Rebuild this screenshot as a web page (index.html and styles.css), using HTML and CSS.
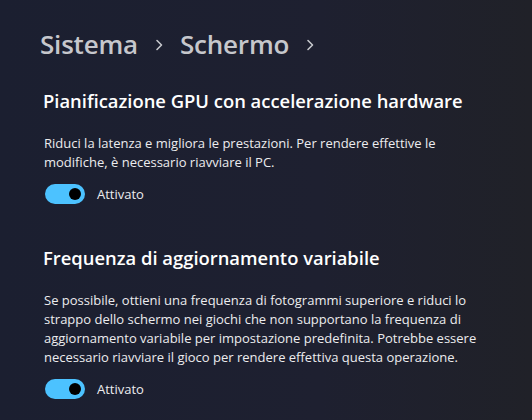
FILE: index.html
```html
<!DOCTYPE html>
<html lang="it">
<head>
<meta charset="utf-8">
<link rel="stylesheet" href="styles.css">
</head>
<body>
<div class="page">
  <nav class="crumbs">
    <span class="crumb">Sistema</span>
    <svg class="chev" viewBox="0 0 8 12" width="8" height="12"><path d="M2 1.5 L6.5 6 L2 10.5" fill="none" stroke="currentColor" stroke-width="1.6" stroke-linecap="round" stroke-linejoin="round"/></svg>
    <span class="crumb">Schermo</span>
    <svg class="chev" viewBox="0 0 8 12" width="8" height="12"><path d="M2 1.5 L6.5 6 L2 10.5" fill="none" stroke="currentColor" stroke-width="1.6" stroke-linecap="round" stroke-linejoin="round"/></svg>
  </nav>

  <section class="setting first">
    <h2 class="title">Pianificazione GPU con accelerazione hardware</h2>
    <p class="desc">Riduci la latenza e migliora le prestazioni. Per rendere effettive le modifiche, è necessario riavviare il PC.</p>
    <div class="toggle-row">
      <span class="toggle"><span class="thumb"></span></span>
      <span class="state">Attivato</span>
    </div>
  </section>

  <section class="setting second">
    <h2 class="title">Frequenza di aggiornamento variabile</h2>
    <p class="desc">Se possibile, ottieni una frequenza di fotogrammi superiore e riduci lo strappo dello schermo nei giochi che non supportano la frequenza di aggiornamento variabile per impostazione predefinita. Potrebbe essere necessario riavviare il gioco per rendere effettiva questa operazione.</p>
    <div class="toggle-row">
      <span class="toggle"><span class="thumb"></span></span>
      <span class="state">Attivato</span>
    </div>
  </section>
</div>
</body>
</html>
```

FILE: styles.css
```css
html, body {
  margin: 0;
  padding: 0;
  height: 100%;
}
body {
  background: linear-gradient(90deg, #1b1f30 0%, #1e2030 60%, #202128 100%);
  font-family: "Open Sans", "Noto Sans", sans-serif;
  color: #ffffff;
  overflow: hidden;
}
.page {
  padding: 28px 0 0 40px;
  width: 480px;
}
.crumbs {
  display: flex;
  align-items: center;
  color: #c6c7cc;
  height: 32px;
}
.crumb {
  font-size: 26px;
  font-weight: 600;
  letter-spacing: -0.2px;
  line-height: 32px;
}
.chev {
  margin: 2px 17px 0 17px;
  color: #c6c7cc;
}
.setting {
  padding-left: 3px;
}
.setting.first {
  margin-top: 28px;
}
.setting.second {
  margin-top: 41px;
}
.title {
  margin: 0;
  font-size: 18.4px;
  font-weight: 600;
  line-height: 26px;
  color: #ffffff;
}
.desc {
  margin: 20px 0 0 1px;
  font-size: 13px;
  line-height: 19px;
  color: #ececee;
  width: 440px;
}
.toggle-row {
  display: flex;
  align-items: center;
  margin: 12px 0 0 2px;
  gap: 12px;
}
.toggle {
  width: 40px;
  height: 20px;
  border-radius: 10px;
  background: #4cc2ff;
  display: flex;
  align-items: center;
  justify-content: flex-end;
  padding-right: 4px;
  box-sizing: border-box;
}
.thumb {
  width: 12px;
  height: 12px;
  border-radius: 50%;
  background: #000000;
}
.state {
  font-size: 13px;
  color: #ececee;
}
```
